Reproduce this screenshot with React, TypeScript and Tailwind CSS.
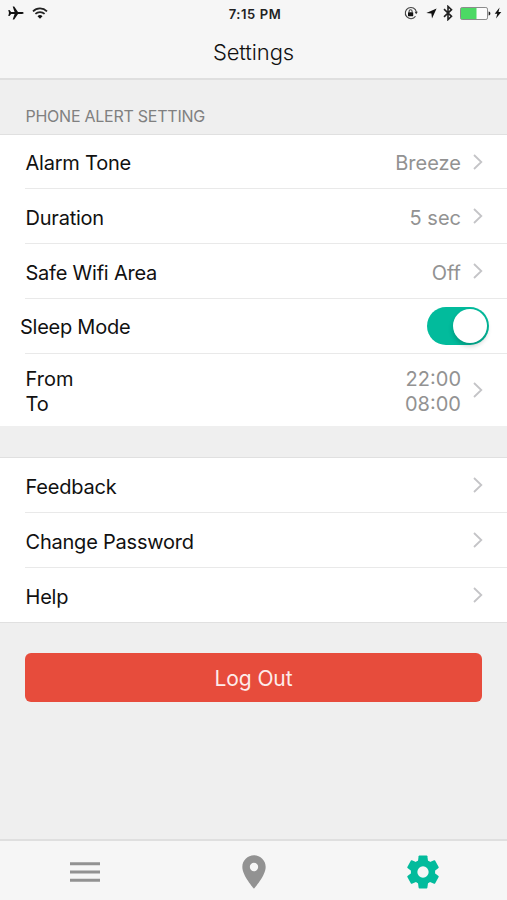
import type { ReactNode } from 'react';

function Chevron() {
  return (
    <svg className="ml-3 block shrink-0" width="10" height="16" viewBox="0 0 10 16" fill="none">
      <path d="M1 1 L8.3 8 L1 15" stroke="#c4c4c7" strokeWidth="1.8" />
    </svg>
  );
}

function Row({ label, value, height, last }: { label: string; value?: string; height: string; last?: boolean }) {
  return (
    <div className={`ml-[25px] flex items-center justify-between pr-[24px] ${height} ${last ? '' : 'border-b border-[#e9e9e9]'}`}>
      <span className="pt-[3px] pl-[0.5px] tracking-[-0.22px]">{label}</span>
      <span className="flex items-center text-[#929292]">
        <span className="pt-[3px]">{value}</span>
        <Chevron />
      </span>
    </div>
  );
}

function Tab({ children }: { children: ReactNode }) {
  return <button className="flex h-full w-[169px] items-center justify-center">{children}</button>;
}

function StatusBar() {
  return (
    <div className="flex h-[27px] items-center justify-between pl-[8px] pr-[5px] text-black">
      <div className="flex w-[180px] items-center gap-[8px] pb-[2px]">
        <svg width="16" height="14" viewBox="0 0 16 14" fill="#111">
          <path d="M15.6 7c0 .6-.7.9-1.5.9H10L6.2 13.5H4.7L6.6 7.9H3.1L1.5 10H.3L1 7 .3 4h1.2l1.6 2.1h3.5L4.7.5h1.5L10 6.1h4.1c.8 0 1.500.3 1.500.9z" />
        </svg>
        <svg width="16" height="12" viewBox="0 0 16 12" fill="none" stroke="#222" strokeWidth="1.7">
          <path d="M1 4.300a10 10 0 0 1 14 0" />
          <path d="M3.400 6.900a6.600 6.600 0 0 1 9.200 0" />
          <path d="M8 11.700 5.500 9.200a3.500 3.500 0 0 1 5 0z" fill="#111" stroke="none" />
        </svg>
      </div>
      <span className="text-[13px] font-semibold tracking-[0.6px] text-[#222]">7:15 PM</span>
      <div className="flex w-[180px] items-center justify-end pb-[1px]">
        <svg width="14" height="14" viewBox="0 0 14 14" fill="none" stroke="#444" strokeWidth="1.1">
          <path d="M11.500 10.300A5.600 5.600 0 1 1 12.400 6" />
          <path d="M10.600 5.800h3.200l-1.600 2.400z" fill="#333" stroke="none" />
          <rect x="4" y="6.200" width="5.200" height="4" rx=".4" fill="#111" stroke="none" />
          <path d="M5.100 6.500V5.200a1.500 1.500 0 0 1 3 0v1.300" />
        </svg>
        <svg className="ml-[8px]" width="11" height="11" viewBox="0 0 11 11" fill="#111">
          <path d="M10.600.4 6 10.500l-.6-5L.3 5z" />
        </svg>
        <svg className="ml-[6px]" width="10" height="16" viewBox="0 0 10 16" fill="none" stroke="#222" strokeWidth="1.6">
          <path d="M1 4.200 8.500 11.300 5 14.600V1.400L8.500 4.700 1 11.800" />
        </svg>
        <svg className="ml-[7px]" width="31" height="13" viewBox="0 0 31 13">
          <rect x=".5" y=".5" width="27" height="12" rx="1.6" fill="#fcfcfc" stroke="#8c8c8c" />
          <path d="M1 1h15.500v11H1z" fill="#4cd964" />
          <path d="M28.600 4.500c1.200.4 1.800 1.100 1.800 2s-.6 1.600-1.800 2z" fill="#222" />
        </svg>
        <svg className="ml-[3px]" width="8" height="12" viewBox="0 0 8 12" fill="#111">
          <path d="M5.600.6.7 6.800h2.600L2 11.500l5.300-6.400H4.500z" />
        </svg>
      </div>
    </div>
  );
}

const TEETH = [0, 60, 120, 180, 240, 300];

export default function App() {
  return (
    <div className="flex h-[900px] w-[507px] flex-col overflow-hidden bg-[#efefef] font-['Inter','Liberation_Sans',sans-serif] text-[20px] leading-[24px] text-[#111]">
      <header className="h-[80px] border-b-2 border-[#dfdfdf] bg-[#f6f6f6]">
        <StatusBar />
        <h1 className="pt-[10px] text-center text-[22px] leading-[30px] font-light tracking-[-0.1px] text-[#111]">Settings</h1>
      </header>

      <h2 className="h-[55px] border-b border-[#e0e0e0] pt-[24px] pl-[25.5px] text-[16px] tracking-[-0.25px] text-[#808080]">PHONE ALERT SETTING</h2>
      <section className="bg-white">
        <Row label="Alarm Tone" value="Breeze" height="h-[54px]" />
        <Row label="Duration" value="5 sec" height="h-[55px]" />
        <Row label="Safe Wifi Area" value="Off" height="h-[55px]" />
        <div className="flex h-[54px] items-center justify-between pr-[18px] pl-[20px]">
          <span className="pt-[2px] tracking-[-0.25px]">Sleep Mode</span>
          <span className="flex h-[38px] w-[62px] items-center justify-end rounded-full bg-[#02bb9c] pr-[2px]">
            <span className="size-[34px] rounded-full bg-white shadow-[0_3px_5px_rgba(0,0,0,0.2)]" />
          </span>
        </div>
        <div className="ml-[25px] flex h-[73px] items-center justify-between border-t border-[#e9e9e9] pr-[24px] leading-[25px]">
          <span className="pt-[4px] pl-[0.5px]">From<br />To</span>
          <span className="flex items-center text-right text-[#929292]">
            <span className="pt-[4px]">22:00<br />08:00</span>
            <Chevron />
          </span>
        </div>
      </section>

      <section className="mt-[31px] h-[166px] border-y border-[#e0e0e0] bg-white">
        <Row label="Feedback" height="h-[55px]" />
        <Row label="Change Password" height="h-[55px]" />
        <Row label="Help" height="h-[54px]" last />
      </section>

      <button className="mx-[25px] mt-[30px] h-[49px] rounded-[6px] bg-[#e74c3c] pt-[2px] text-[21px] tracking-[-0.1px] text-[#fdeceb]">Log Out</button>

      <nav className="mt-auto flex h-[61px] items-center border-t-2 border-[#dfdfdf] bg-[#f6f6f6] pt-[2px]">
        <Tab>
          <svg width="30" height="22" viewBox="0 0 30 22" fill="#929292">
            <path d="M0 1.300h30v3H0zM0 9.500h30v3H0zM0 17.700h30v3H0z" />
          </svg>
        </Tab>
        <Tab>
          <svg width="40" height="40" viewBox="0 0 24 24" fill="#929292">
            <path d="M12 2C8.130 2 5 5.130 5 9c0 5.250 7 13 7 13s7-7.750 7-13c0-3.870-3.130-7-7-7zm0 9.500a2.500 2.500 0 1 1 0-5 2.500 2.500 0 0 1 0 5z" />
          </svg>
        </Tab>
        <Tab>
          <svg width="40" height="40" viewBox="-12 -12 24 24" fill="#02bb9c">
            <g transform="scale(.97 1)">
              <circle r="5.500" fill="none" stroke="#02bb9c" strokeWidth="4" />
              {TEETH.map((angle) => (
                <path key={angle} d="M-3.200-6-2.700-9.500Q-2.600-9.900-2.200-9.900H2.200Q2.600-9.900 2.700-9.500L3.200-6z" transform={`rotate(${angle})`} />
              ))}
            </g>
          </svg>
        </Tab>
      </nav>
    </div>
  );
}
